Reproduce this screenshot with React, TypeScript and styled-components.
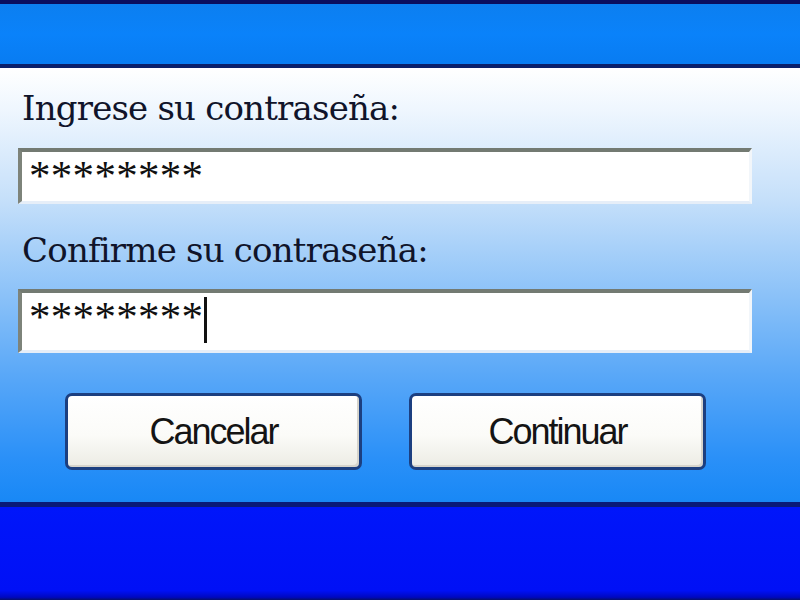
import React from 'react';
import styled, { createGlobalStyle } from 'styled-components';

const GlobalStyle = createGlobalStyle`
  html, body {
    margin: 0;
    padding: 0;
    height: 100%;
    overflow: hidden;
  }
  #root {
    height: 100%;
  }
`;

const Window = styled.div`
  display: flex;
  flex-direction: column;
  width: 800px;
  height: 600px;
  background: #0a0f60;
`;

const TitleBand = styled.div`
  height: 60px;
  margin-top: 4px;
  background: linear-gradient(180deg, #0c7ff0 0%, #0a82fa 50%, #087cf2 100%);
  border-bottom: 4px solid #0a1f6a;
  box-shadow: 0 1px 0 #6a7fb0;
`;

const Panel = styled.div`
  display: flex;
  flex-direction: column;
  height: 434px;
  box-sizing: border-box;
  padding: 17px 48px 0 18px;
  background: linear-gradient(
    180deg,
    #ffffff 0%,
    #eef6fe 10%,
    #c6e0fa 30%,
    #8cc2f8 52%,
    #56a6f8 72%,
    #2a90f8 90%,
    #1888f6 100%
  );
`;

const Label = styled.div`
  font-family: "DejaVu Serif", "Liberation Serif", serif;
  font-size: 34px;
  line-height: 46px;
  color: #10142a;
  padding-left: 4px;
  letter-spacing: -0.8px;
`;

const Field = styled.div<{ $height: number; $gap: number }>`
  display: flex;
  align-items: flex-start;
  height: ${(p) => p.$height}px;
  margin-top: ${(p) => p.$gap}px;
  box-sizing: border-box;
  padding: 4px 0 0 7px;
  background: #ffffff;
  border-top: 4px solid #737a72;
  border-left: 4px solid #7d837a;
  border-right: 3px solid #f2f6fa;
  border-bottom: 3px solid #e6eef8;
  font-family: "Liberation Serif", "DejaVu Serif", serif;
  font-size: 43px;
  line-height: 40px;
  color: #101010;
  letter-spacing: 0.3px;
`;

const Caret = styled.span`
  display: inline-block;
  width: 3px;
  height: 46px;
  margin-left: 1px;
  background: #111111;
`;

const LabelGap = styled.div`
  height: 23px;
`;

const ButtonRow = styled.div`
  display: flex;
  gap: 47px;
  margin-top: 40px;
  padding-left: 47px;
`;

const Button = styled.button`
  width: 297px;
  height: 77px;
  box-sizing: border-box;
  border: 3px solid #1c3f80;
  border-radius: 7px;
  background: linear-gradient(180deg, #ffffff 0%, #fbfbf8 55%, #ecebe4 100%);
  box-shadow: inset -2px -2px 0 #d6d4cc;
  font-family: "Liberation Sans", Arial, sans-serif;
  font-size: 36px;
  letter-spacing: -2px;
  color: #141414;
  padding: 0;
`;

const BottomBand = styled.div`
  flex: 1;
  border-top: 5px solid #0a1a78;
  background: linear-gradient(180deg, #0016fa 0%, #0010f6 90%, #0008c0 97%, #06106a 100%);
`;

export default function App() {
  return (
    <>
      <GlobalStyle />
      <Window>
        <TitleBand />
        <Panel>
          <Label>Ingrese su contraseña:</Label>
          <Field $height={56} $gap={17}>********</Field>
          <LabelGap />
          <Label>Confirme su contraseña:</Label>
          <Field $height={64} $gap={16}>
            ********
            <Caret />
          </Field>
          <ButtonRow>
            <Button type="button">Cancelar</Button>
            <Button type="button">Continuar</Button>
          </ButtonRow>
        </Panel>
        <BottomBand />
      </Window>
    </>
  );
}
